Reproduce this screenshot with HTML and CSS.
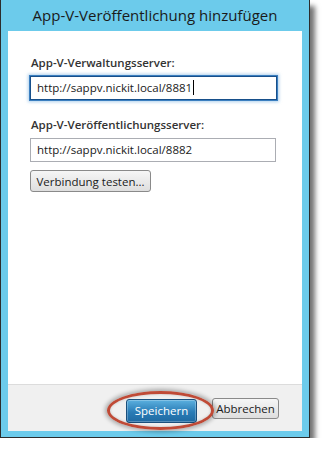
FILE: index.html
```html
<!DOCTYPE html>
<html lang="de">
<head>
  <meta charset="UTF-8" />
  <title>App-V-Veröffentlichung hinzufügen</title>
  <link rel="stylesheet" href="styles.css">
</head>
<body>

<div class="window">
  <!-- Titelleiste -->
  <div class="titlebar">App-V-Veröffentlichung hinzufügen</div>

  <div class="panel">
    <!-- Formular -->
    <div class="form">
      <label class="field-label">App-V-Verwaltungsserver:</label>
      <div class="textbox focused">http://sappv.nickit.local/8881<span class="caret"></span></div>

      <label class="field-label">App-V-Veröffentlichungsserver:</label>
      <div class="textbox">http://sappv.nickit.local/8882</div>

      <button class="btn test-btn">Verbindung testen...</button>
    </div>

    <!-- Schaltflächen -->
    <div class="footer">
      <div class="save-wrap">
        <button class="btn primary">Speichern</button>
        <span class="highlight"></span>
      </div>
      <button class="btn">Abbrechen</button>
    </div>
  </div>
</div>

</body>
</html>
```

FILE: styles.css
```css
body {
  margin: 0;
  background: #fff;
  font-family: "Open Sans", "Noto Sans", sans-serif;
}

.window {
  width: 308px;
  height: 437px;
  background-color: #6ccbeb;
  border: 1px solid #2c2c2c;
  border-top: none;
  box-shadow: 5px 6px 5px rgba(0, 0, 0, 0.55);
  display: flex;
  flex-direction: column;
}

.titlebar {
  height: 31px;
  line-height: 30px;
  text-align: center;
  font-size: 15px;
  color: #1a1a1a;
}

.panel {
  flex-grow: 1;
  margin: 0 7px 6px 7px;
  background: #fff;
  display: flex;
  flex-direction: column;
}

/* Formularbereich */
.form {
  flex-grow: 1;
  padding: 24px 0 0 22px;
  display: flex;
  flex-direction: column;
  align-items: flex-start;
  border-bottom: 1px solid #dcdcdc;
}

.field-label {
  font-size: 11.5px;
  font-weight: 600;
  color: #333;
  line-height: 16px;
  margin-left: 1px;
}

.textbox {
  box-sizing: border-box;
  width: 246px;
  height: 24px;
  margin: 5px 0 17px 0;
  padding: 0 6px;
  border: 1px solid #abadb3;
  font-size: 11.5px;
  line-height: 22px;
  color: #1a1a1a;
}

.textbox.focused {
  width: 247px;
  border: 1px solid #174f8a;
  box-shadow: 0 0 0 1px #3b7fc0, 0 0 3px 2px rgba(110, 170, 220, 0.55);
}

.caret {
  display: inline-block;
  width: 1px;
  height: 15px;
  margin-left: 1px;
  vertical-align: -3px;
  background: #000;
}

.form .textbox:nth-of-type(2) {
  margin-bottom: 8px;
}

.btn {
  height: 22px;
  padding: 0;
  white-space: nowrap;
  font-family: inherit;
  font-size: 11.5px;
  color: #1a1a1a;
  border: 1px solid #8a8a8a;
  border-radius: 3px;
  background: linear-gradient(#f6f6f6, #dedede);
}

.test-btn {
  width: 121px;
}

/* Fußzeile */
.footer {
  height: 46px;
  background: #f0f0f0;
  display: flex;
  justify-content: flex-end;
  align-items: flex-start;
  gap: 15px;
  padding: 13px 23px 0 0;
  box-sizing: border-box;
}

.footer .btn {
  width: 67px;
  height: 21px;
}

.save-wrap {
  position: relative;
}

.footer .btn.primary {
  width: 71px;
  height: 24px;
  color: #fff;
  border-color: #1a4f7c;
  background: linear-gradient(#5bb0df, #2a7cb6 55%, #1f6aa2);
  box-shadow: inset 0 0 0 1px rgba(255, 255, 255, 0.25);
}

.highlight {
  position: absolute;
  left: -19px;
  top: -7px;
  width: 101px;
  height: 33px;
  border: 3px solid #bf4a36;
  border-radius: 50%;
  box-shadow: 0 0 4px 2px rgba(0, 0, 0, 0.3), inset 0 0 3px rgba(0, 0, 0, 0.2);
  pointer-events: none;
}
```
